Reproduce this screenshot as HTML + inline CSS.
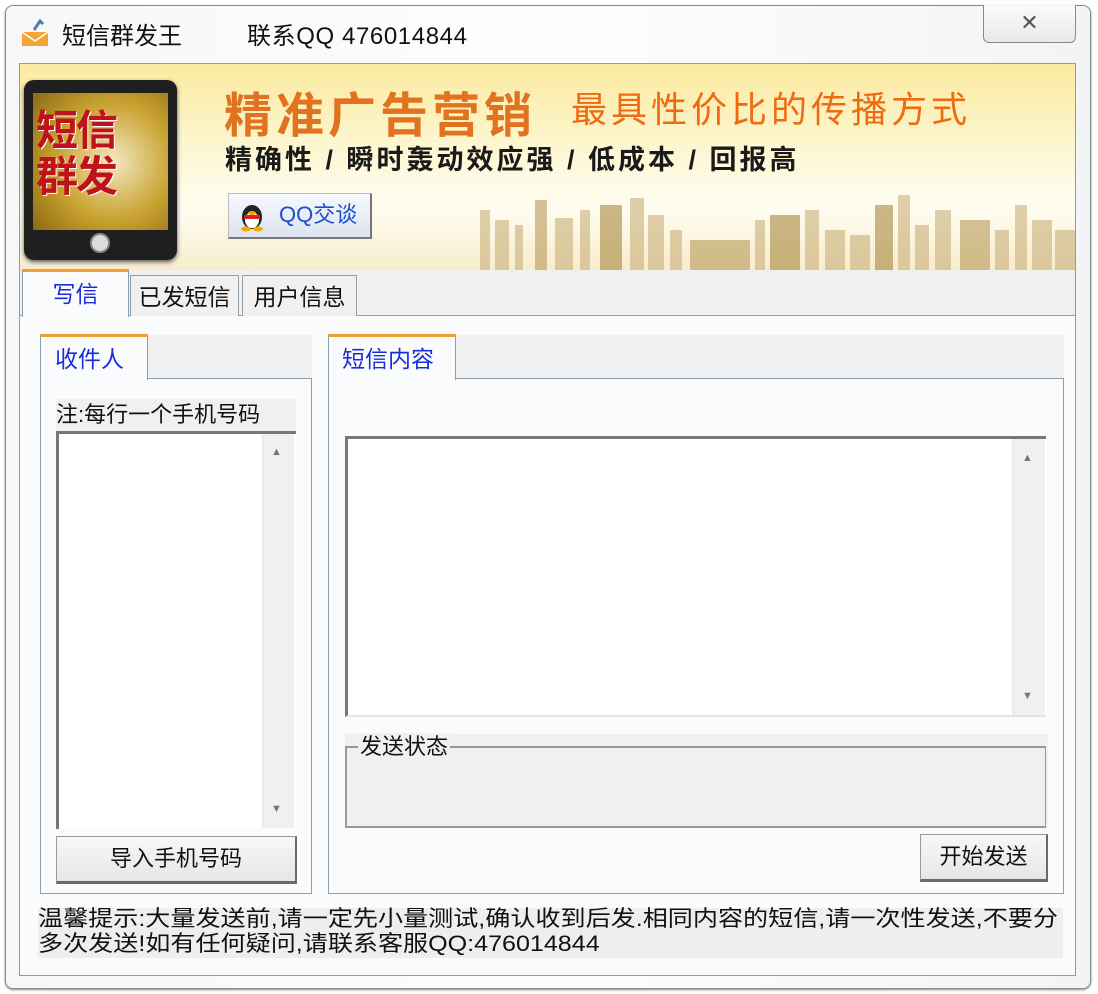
<!DOCTYPE html>
<html><head><meta charset="utf-8"><style>
*{margin:0;padding:0;box-sizing:border-box}
body{width:1098px;height:994px;background:#fff;position:relative;overflow:hidden;font-family:"Liberation Sans","Noto Sans CJK SC","WenQuanYi Zen Hei",sans-serif;color:#111}
.a{position:absolute}
#win{left:5px;top:5px;width:1086px;height:984px;border:1px solid #8a8a8a;border-radius:8px;background:linear-gradient(90deg,#f6f7f8,#fdfdfd 50%,#f3f4f5);box-shadow:0 1px 2px #888}
#client{left:19px;top:63px;width:1057px;height:913px;border:1px solid #8e9aa5;background:#fafbfd}
.tab{border:1px solid #8ea0ad;border-bottom:none;background:#f0f0f0;font-size:22px;text-align:center}
.blue{color:#1a2ddb}
.btn{border:1px solid #9a9a9a;border-right:2px solid #6a6a6a;border-bottom:3px solid #6a6a6a;background:linear-gradient(#f7f7f7,#e6e6e6);font-size:22px;text-align:center}
.sb{background:#f0f0f0;border-left:1px solid #e6e6e6}
</style></head><body>
<div id="win" class="a"></div>
<!-- title -->
<svg class="a" style="left:20px;top:18px" width="32" height="30" viewBox="0 0 32 30"><path d="M2 14h26v14H2z" fill="#f3a636"/><path d="M2 14l13 9 13-9" fill="none" stroke="#fff" stroke-width="1.5"/><path d="M14 12l6-9 3 3" fill="none" stroke="#5a7aa8" stroke-width="3"/></svg>
<div class="a" style="left:62px;top:16px;font-size:24px">短信群发王</div>
<div class="a" style="left:247px;top:16px;font-size:24px;letter-spacing:0.6px">联系QQ 476014844</div>
<div class="a" style="left:983px;top:5px;width:93px;height:38px;border:1px solid #8a8a8a;border-top:none;border-radius:0 0 6px 6px;background:linear-gradient(#fafafa,#e9e9e9);text-align:center;font-size:22px;color:#555;line-height:36px">✕</div>
<div id="client" class="a"></div>
<!-- banner -->
<div class="a" style="left:20px;top:64px;width:1055px;height:206px;background:linear-gradient(180deg,#fbeaa0 0%,#fdf6d0 40%,#fffdf2 70%,#f7eccb 100%)"></div>
<svg class="a" style="left:420px;top:170px" width="655" height="100" viewBox="0 0 655 100">
<g fill="#c9b07a" opacity=".6">
<rect x="60" y="40" width="10" height="60"/><rect x="75" y="50" width="14" height="50"/><rect x="95" y="55" width="8" height="45"/><rect x="115" y="30" width="12" height="70" fill="#b89a5a"/><rect x="135" y="48" width="18" height="52"/><rect x="160" y="40" width="10" height="60"/><rect x="180" y="35" width="22" height="65" fill="#a8893f"/><rect x="210" y="28" width="14" height="72"/><rect x="228" y="45" width="16" height="55"/><rect x="250" y="60" width="12" height="40"/><rect x="270" y="70" width="60" height="30" fill="#b89a5a"/><rect x="335" y="50" width="10" height="50"/><rect x="350" y="45" width="30" height="55" fill="#a8893f"/><rect x="385" y="40" width="14" height="60"/><rect x="405" y="60" width="20" height="40"/><rect x="430" y="65" width="20" height="35"/><rect x="455" y="35" width="18" height="65" fill="#a8893f"/><rect x="478" y="25" width="12" height="75"/><rect x="495" y="55" width="14" height="45"/><rect x="515" y="40" width="16" height="60"/><rect x="540" y="50" width="30" height="50" fill="#b89a5a"/><rect x="575" y="60" width="14" height="40"/><rect x="595" y="35" width="12" height="65"/><rect x="612" y="50" width="20" height="50"/><rect x="635" y="60" width="20" height="40"/>
</g></svg>
<!-- phone -->
<div class="a" style="left:24px;top:80px;width:153px;height:180px;background:#1f1f1f;border-radius:10px;box-shadow:0 2px 4px #555"></div>
<div class="a" style="left:33px;top:93px;width:135px;height:137px;background:radial-gradient(circle at 60% 50%,#f2e7c0,#c9a230 55%,#8c6a12);"></div>
<div class="a" style="left:36px;top:108px;font-size:42px;font-weight:bold;color:#c0121a;line-height:46px;letter-spacing:-2px;text-shadow:1px 1px 0 #fff">短信<br>群发</div>
<div class="a" style="left:90px;top:233px;width:20px;height:20px;border-radius:50%;background:#ddd;border:2px solid #888"></div>
<div class="a" style="left:224px;top:76px;font-size:48px;font-weight:bold;color:#e07220;letter-spacing:4px;white-space:nowrap">精准广告营销</div>
<div class="a" style="left:571px;top:81px;font-size:36px;color:#f06a12;letter-spacing:4px;white-space:nowrap">最具性价比的传播方式</div>
<div class="a" style="left:225px;top:138px;font-size:27px;font-weight:bold;color:#1a1a1a;letter-spacing:3px;white-space:nowrap">精确性 / 瞬时轰动效应强 / 低成本 / 回报高</div>
<div class="a" style="left:228px;top:193px;width:144px;height:46px;border:1px solid #bbb;border-right:2px solid #777;border-bottom:2px solid #777;background:linear-gradient(#f6f8fc,#dde4f0);font-size:22px;line-height:42px;color:#1a4fd0;padding-left:50px">QQ交谈</div>
<svg class="a" style="left:236px;top:198px" width="32" height="34" viewBox="0 0 32 34"><ellipse cx="16" cy="19" rx="10" ry="12" fill="#222"/><ellipse cx="16" cy="22" rx="7" ry="8" fill="#fff"/><rect x="8" y="17" width="16" height="4" fill="#e02020"/><ellipse cx="10" cy="31" rx="5" ry="2.5" fill="#f2a900"/><ellipse cx="22" cy="31" rx="5" ry="2.5" fill="#f2a900"/><ellipse cx="16" cy="15" rx="4" ry="2" fill="#f2a900"/></svg>
<!-- tabs strip -->
<div class="a" style="left:20px;top:270px;width:1055px;height:46px;background:#f0f0f0;border-bottom:1px solid #8ea0ad"></div>
<div class="a tab blue" style="left:22px;top:269px;width:107px;height:48px;background:#fafbfd;border-top:3px solid #f0a030;line-height:44px;font-size:23px">写信</div>
<div class="a tab" style="left:130px;top:275px;width:109px;height:41px;line-height:42px;font-size:23px">已发短信</div>
<div class="a tab" style="left:242px;top:275px;width:115px;height:41px;line-height:42px;font-size:23px">用户信息</div>
<!-- left group -->
<div class="a" style="left:40px;top:335px;width:272px;height:44px;background:#f0f0f0"></div>
<div class="a" style="left:40px;top:378px;width:272px;height:516px;border:1px solid #8ea0ad;border-top:1px solid #8ea0ad"></div>
<div class="a tab blue" style="left:40px;top:334px;width:108px;height:46px;background:#fafbfd;border-top:3px solid #f0a030;line-height:44px;text-align:left;padding-left:14px;font-size:23px">收件人</div>
<div class="a" style="left:56px;top:399px;width:240px;height:32px;background:#f0f0f0;font-size:22px;line-height:32px">注:每行一个手机号码</div>
<div class="a" style="left:56px;top:431px;width:240px;height:398px;background:#fff;border-top:3px solid #777;border-left:3px solid #777"></div>
<div class="a sb" style="left:262px;top:434px;width:32px;height:394px"></div>
<div class="a" style="left:271px;top:446px;color:#777;font-size:11px">▲</div>
<div class="a" style="left:271px;top:803px;color:#777;font-size:11px">▼</div>
<div class="a btn" style="left:56px;top:836px;width:241px;height:48px;line-height:44px">导入手机号码</div>
<!-- right group -->
<div class="a" style="left:328px;top:335px;width:736px;height:44px;background:#f0f0f0"></div>
<div class="a" style="left:328px;top:378px;width:736px;height:516px;border:1px solid #8ea0ad"></div>
<div class="a tab blue" style="left:328px;top:334px;width:128px;height:46px;background:#fafbfd;border-top:3px solid #f0a030;line-height:44px;text-align:left;padding-left:13px;font-size:23px">短信内容</div>
<div class="a" style="left:345px;top:436px;width:701px;height:281px;background:#fff;border-top:3px solid #777;border-left:3px solid #777;border-bottom:2px solid #e4e4e4"></div>
<div class="a sb" style="left:1012px;top:439px;width:33px;height:276px"></div>
<div class="a" style="left:1022px;top:452px;color:#777;font-size:11px">▲</div>
<div class="a" style="left:1022px;top:690px;color:#777;font-size:11px">▼</div>
<div class="a" style="left:345px;top:734px;width:703px;height:94px;background:#f0f0f0"></div>
<div class="a" style="left:345px;top:746px;width:701px;height:82px;border:2px solid #999;border-right:1px solid #999"></div>
<div class="a" style="left:358px;top:733px;font-size:22px;line-height:28px;background:#f0f0f0;padding:0 2px">发送状态</div>
<div class="a btn" style="left:920px;top:834px;width:128px;height:48px;line-height:44px">开始发送</div>
<!-- footer -->
<div class="a" style="left:38px;top:908px;width:1025px;height:50px;background:#eeeeee"></div>
<div class="a" style="left:38px;top:906px;font-size:22px;line-height:25px;white-space:nowrap;transform-origin:0 0;transform:scaleX(1.14)">温馨提示:大量发送前,请一定先小量测试,确认收到后发.相同内容的短信,请一次性发送,不要分<br>多次发送!如有任何疑问,请联系客服QQ:476014844</div>
</body></html>
